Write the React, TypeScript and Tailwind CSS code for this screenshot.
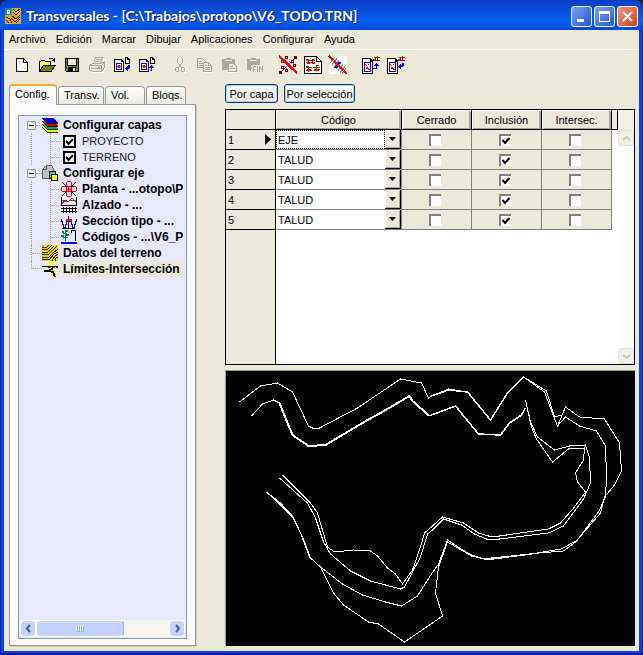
import { useState } from "react";
import type { ReactNode } from "react";
import clsx from "clsx";

type IconProps = { size?: number; children: ReactNode };

function Icon({ size = 16, children }: IconProps) {
  return (
    <svg width={size} height={size} viewBox={`0 0 ${size} ${size}`} fill="none" shapeRendering="crispEdges" className="shrink-0" aria-hidden="true">
      {children}
    </svg>
  );
}

const NewIcon = () => (
  <Icon>
    <path d="M2.5 1.5h7l4 4v9h-11z" fill="#fff" stroke="#000" />
    <path d="M9.5 1.5v4h4" stroke="#000" />
  </Icon>
);

const OpenIcon = () => (
  <Icon size={18}>
    <path d="M1.5 15.5v-10h1l1-1h3l1 1h5v3" fill="#ffff66" stroke="#000" />
    <path d="M1.5 15.5l4-6.5h12l-4.5 6.5z" fill="#808000" stroke="#000" />
    <path d="M10.5 3.5l1-1h3l2 2M16.5 1.5v4M14 4.5h3" stroke="#000" />
  </Icon>
);

const SaveIcon = () => (
  <Icon>
    <path d="M1.5 1.5h13v13h-12l-1-1z" fill="#808000" stroke="#000" />
    <path d="M4 2h8v6H4z" fill="#ece9d8" />
    <path d="M3.5 2v6.5h9V2" stroke="#000" />
    <path d="M4 10h8v5H4z" fill="#000" />
    <path d="M9 11h2v3H9z" fill="#ece9d8" />
  </Icon>
);

const PrintIcon = () => (
  <Icon size={18}>
    <path d="M5.5 7.5l2-6h7l-2 6M1.5 9.5l3-2h9l3-2v6l-3 4h-9l-3-2zM1.5 9.5h12v6M13.5 9.5l3-3" fill="#ece9d8" stroke="#aca899" />
    <path d="M8 3.5h5M7 5.5h5M3 12.5h9M10 11h2" stroke="#aca899" />
    <path d="M5 16.5h9l3-4" stroke="#fff" />
  </Icon>
);

function TransferIcon({ incoming }: { incoming: boolean }) {
  return (
    <Icon size={18}>
      <path d="M1 3h8v1h1v1h1v11H1z" fill="#000" />
      <path d="M2 4h6v2h2v9H2z" fill="#fff" />
      <path d="M3 7h6v7H3z" fill="#0000ff" />
      <path d="M4 8h4v5H4z" fill="#fff" />
      <path d="M4 10h4v1H4zM5 9h2v3H5z" fill="#ff0000" />
      <path d="M12 1h3v1h1v1h1v5h-5z" fill="#000" />
      <path d="M13 2h1v2h2v3h-3z" fill="#fff" />
      {incoming ? (
        <path d="M15 9h2v3h-1v1h-1v2h-1v-1h-1v-1h-1v-1h1v-1h1v-1h1z" fill="#0000ff" />
      ) : (
        <path d="M13 9h1v1h1v1h1v1h-2v3h-2v-1h1v-2h-2v-1h1v-1h1z" fill="#0000ff" />
      )}
    </Icon>
  );
}

const CutIcon = () => (
  <Icon>
    <path d="M5.5 1v4l4 6M10.5 1v4l-4 6" stroke="#aca899" />
    <path d="M4.5 10.5h2v4h-2l-1-1v-2zM9.5 10.5h2l1 1v2l-1 1h-2z" stroke="#aca899" />
    <path d="M6.5 2v3l1 2M13.5 12v3h-3" stroke="#fff" />
  </Icon>
);

const CopyIcon = () => (
  <Icon>
    <path d="M.5 1.5h5l3 3v6h-8z" fill="#ece9d8" stroke="#aca899" />
    <path d="M2 4.5h3M2 6.5h4M2 8.5h4" stroke="#aca899" />
    <path d="M6.5 5.5h5l3 3v6h-8z" fill="#ece9d8" stroke="#aca899" />
    <path d="M11.5 5.5v3h3M8 8.5h2M8 10.5h5M8 12.5h5" stroke="#aca899" />
    <path d="M1 11.5h5M7 15.5h8" stroke="#fff" />
  </Icon>
);

function PasteIcon({ toEnd }: { toEnd?: boolean }) {
  return (
    <Icon>
      <path d="M0 2h4V1h5v1h4v11H0z" fill="#aca899" />
      <path d="M3 3.5h7" stroke="#ece9d8" />
      {toEnd ? (
        <>
          <path d="M4 8h12v8H4z" fill="#ece9d8" />
          <path d="M1 11h4v1H1zM3 9h1v5H3zM6 9h3v1H7v2h1v1H7v2H6zM10 9h1v6h-1zM12 9h1v1h1v2h1V9h1v6h-1v-2h-1v-1h-1v3h-1z" fill="#aca899" />
        </>
      ) : (
        <>
          <path d="M6.5 6.5h5l3 3v5h-8z" fill="#ece9d8" stroke="#aca899" />
          <path d="M8 9.5h3M8 11.5h5" stroke="#aca899" />
          <path d="M7 15.5h8" stroke="#fff" />
        </>
      )}
    </Icon>
  );
}

const CrossingIcon = () => (
  <Icon size={20}>
    <path d="M18 2L2 18" stroke="#0000d0" />
    <path d="M6 4l1 4 4 4M12 4l-1 4 5 1M4 12l4-1 2 5" stroke="#6060ff" strokeDasharray="1 1" />
    <path d="M1 1l18 17" stroke="#ff0000" strokeWidth="2.5" />
    <path d="M3.5 5.5h2v2h-2zM7.5 1.5h2v2h-2zM13.5 5.5h2v2h-2zM16.5 1.5h2v2h-2zM3.5 11.5h2v2h-2zM7.5 14.5h2v2h-2zM1.5 16.5h2v2h-2zM15.5 9.5h2v2h-2z" stroke="#800000" />
  </Icon>
);

const SheetIcon = () => (
  <Icon size={20}>
    <path d="M1.5 1.5h12l5 5v12h-17z" fill="#fff" stroke="#000" />
    <path d="M13.5 1.5v5h5" stroke="#000" />
    <path d="M3 5.5h9M3 12.5h6M10 12.5h7" stroke="#007000" />
    <path d="M3 7h9v1H3zM5 4h1v5H5zM9 4h1v5H9zM3 4h3v1H3zM9 4h3v1H9zM3 15h6v1H3zM11 14h6v1h-6zM5 11h1v6H5zM13 10h1v6h-1zM3 11h3v1H3zM13 10h3v1h-3z" fill="#e00000" />
    <path d="M4 8h3v1H4zM9 8h3v1H9zM4 14h4v1H4zM11 15h5v1h-5z" fill="#e00000" />
  </Icon>
);

const AxisIcon = () => (
  <Icon size={20}>
    <path d="M1 1h18v18H1z" fill="#fff" />
    <path d="M2 8l5-6M4 10l5-7M6 12l5-7M8 14l5-7M10 16l5-7M12 18l5-7M14 19l4-6" stroke="#909090" />
    <path d="M7 13l5-6" stroke="#0000ff" strokeWidth="2" />
    <path d="M1 1l18 18" stroke="#ff0000" strokeWidth="1.5" strokeDasharray="6 1" />
  </Icon>
);

function ExportIcon({ down }: { down: boolean }) {
  return (
    <Icon size={20}>
      <path d="M1 3h9v1h1v1h1v14H1z" fill="#000" />
      <path d="M2 4h7v3h2v11H2z" fill="#fff" />
      <path d="M3 7h7v10H3z" fill="#0000ff" />
      <path d="M4 8h5v8H4z" fill="#fff" />
      <path d="M4 9h1v1h1v1H5v-1H4zM7 9h1v1H7zM5 12h2v1h1v1h1v1H7v-1H5z" fill="#ff0000" />
      <path d="M13 2h6v1h-6zM12 4h3v1h-3z" fill="#007000" />
      <path d="M12 5h7v1h-7zM14 2h1v4h-1zM16 1h1v5h-1z" fill="#d00000" />
      {down ? (
        <path d="M16 8h2v3h-1v1h-2v2h-1v-1h-1v-1h-1v-1h1v-1h1V9h1v1h1z" fill="#0000ff" />
      ) : (
        <path d="M15 8h1v1h1v1h1v1h-2v3h-4v-1h3v-2h-2v-1h1V9h1z" fill="#0000ff" />
      )}
    </Icon>
  );
}

const LayersIcon = () => (
  <Icon>
    <path d="M0 10h11l5 5H5z" fill="#ffff00" />
    <path d="M0 10l5 5h11" stroke="#404000" />
    <path d="M0 7h11l5 5H5z" fill="#00c000" />
    <path d="M0 7l5 5h11" stroke="#003000" />
    <path d="M0 4h11l5 5H5z" fill="#e00000" />
    <path d="M0 4l5 5h11" stroke="#300000" />
    <path d="M0 1h11l5 5H5z" fill="#0000e0" />
    <path d="M0 1l5 5h11" stroke="#000030" />
  </Icon>
);

const AxisConfigIcon = () => (
  <Icon>
    <path d="M.5 13.5v-9l4-4h5l2 3v10z" fill="#c0c0c0" stroke="#606060" />
    <path d="M4.5.5v4h-4" stroke="#606060" />
    <path d="M7.5 6.5h6v7h-6z" fill="#00e0ff" stroke="#000" />
    <path d="M9.5 9.5h6v6h-6z" fill="#ffff00" stroke="#000" />
  </Icon>
);

const PlanIcon = () => (
  <Icon>
    <path d="M1 1l14 14M15 1L1 15" stroke="#000" />
    <path d="M6.5.5h3l1 1v3l-1 1h-3l-1-1v-3zM1.5 5.5h3l1 1v3l-1 1h-3l-1-1v-3zM11.5 5.5h3l1 1v3l-1 1h-3l-1-1v-3zM6.5 10.5h3l1 1v3l-1 1h-3l-1-1v-3z" fill="#e8e8ff" stroke="#ff0000" />
    <path d="M6 6h4v4H6z" fill="#ffb0b0" />
    <path d="M7.5 6v4M6 8.5h4" stroke="#ff0000" />
  </Icon>
);

const ElevationIcon = () => (
  <Icon>
    <path d="M.5 0v9M15.5 0v9M0 8.5h16" stroke="#000" />
    <path d="M1 3l5 2 4-2 5 1" stroke="#008000" />
    <path d="M1 7l3-4 3 2 4-4 4 4" stroke="#ff0000" />
    <path d="M0 11.5h16M0 14.5h16M2.5 10v6M5.5 10v6M8.5 10v6M11.5 10v6M14.5 10v6" stroke="#000" />
  </Icon>
);

const SectionIcon = () => (
  <Icon>
    <path d="M.5 6v2h1v3h1v3h2v-3h1v-3h5v3h1v3h2v-3h1v-3h1v-2" stroke="#0000ff" />
    <path d="M7.5 3v12M1 15.5h13" stroke="#000" />
    <path d="M5 6h6v2H5z" fill="#ff0000" />
  </Icon>
);

const CodesIcon = () => (
  <Icon>
    <path d="M1 2h2v2H1zM4 1h3v2H4zM2 4h4v1H2zM0 6h3v2H0zM5 5h3v2H5zM2 8h5v1H2zM4 3h1v9H4z" fill="#008040" />
    <path d="M10.5 4v-3h4v11" stroke="#000" />
    <path d="M0 13h16v2H0z" fill="#0000ff" />
  </Icon>
);

const TerrainIcon = () => (
  <Icon>
    <path d="M0 0h16v16H0z" fill="#e8d800" />
    <path d="M0 2h2l2 1 3-3M0 4h3l2 1 5-5M0 7l5 1 7-7M0 9l6 1 4-4 5-5M0 12l6 1 5-5 5-4M0 14l7 1 5-6 4-2M10 16l3-5 3-2M13 16l1-3 2-1" stroke="#302c00" />
  </Icon>
);

const LimitsIcon = () => (
  <Icon>
    <path d="M4 5l6-5h3v6l2 10-7-3z" fill="#ffff60" />
    <path d="M0 5.5h16" stroke="#000" />
    <path d="M6 6.5h10" stroke="#b00000" strokeDasharray="3 1" />
    <path d="M11 7l-4 3H2M7 10l4 1 2 5" stroke="#000" strokeWidth="2" />
  </Icon>
);

const menus = ["Archivo", "Edición", "Marcar", "Dibujar", "Aplicaciones", "Configurar", "Ayuda"];

const toolGroups: { label: string; icon: ReactNode; disabled?: boolean }[][] = [
  [
    { label: "Nuevo", icon: <NewIcon /> },
    { label: "Abrir", icon: <OpenIcon /> },
    { label: "Guardar", icon: <SaveIcon /> },
    { label: "Imprimir", icon: <PrintIcon />, disabled: true },
    { label: "Importar", icon: <TransferIcon incoming /> },
    { label: "Exportar", icon: <TransferIcon incoming={false} /> },
  ],
  [
    { label: "Cortar", icon: <CutIcon />, disabled: true },
    { label: "Copiar", icon: <CopyIcon />, disabled: true },
    { label: "Pegar", icon: <PasteIcon />, disabled: true },
    { label: "Pegar al final", icon: <PasteIcon toEnd />, disabled: true },
  ],
  [
    { label: "Cruces", icon: <CrossingIcon /> },
    { label: "Hoja", icon: <SheetIcon /> },
    { label: "Eje", icon: <AxisIcon /> },
  ],
  [
    { label: "Enviar perfiles", icon: <ExportIcon down={false} /> },
    { label: "Recibir perfiles", icon: <ExportIcon down /> },
  ],
];

const tabs = [
  { label: "Config.", width: "w-12" },
  { label: "Transv.", width: "w-[46px]" },
  { label: "Vol.", width: "w-10" },
  { label: "Bloqs.", width: "w-10" },
];

const initialRows = [
  { code: "EJE", closed: false, included: true, crossed: false },
  { code: "TALUD", closed: false, included: true, crossed: false },
  { code: "TALUD", closed: false, included: true, crossed: false },
  { code: "TALUD", closed: false, included: true, crossed: false },
  { code: "TALUD", closed: false, included: true, crossed: false },
];

const thinLines = [
  "13,31 34,15 51,12 66,21 82,55 86,57 93,57 131,37 174,8 195,12 202,27 205,25 222,18 241,21 264,49 281,22 297,6 320,20 328,46 335,44",
  "297,6 318,21 327,45 331,55 339,36 353,46 378,48 393,72 395,100 388,114 378,126 374,142 349,171 337,180 313,182 265,187",
  "331,55 339,46 353,55 370,60 379,75 380,106 379,126 372,141 351,169 335,178 305,183 265,188 258,188 245,184 233,177 221,169 212,193 205,203 191,225 175,235 159,231 136,224 116,213 94,196 83,186 74,162 66,146 52,132 40,121",
  "40,121 54,132 66,145 76,166 84,187 94,196 107,222 117,234 142,251 152,253 178,271 206,252 216,245 209,222 212,196 221,171 233,178 245,185 258,188",
  "53,107 81,132 89,147 97,171 104,183 124,200 144,210 174,218 178,216 194,186 201,163 206,159 217,148 235,154 248,163 260,168 273,168 322,162 337,155 357,128 364,112 363,87 359,74 343,75 328,79 311,66 304,51 299,29",
  "56,104 84,132 91,142 98,166 101,176 108,181 127,179 144,180 151,185 161,197 169,203 176,213 186,199 194,176 198,162 206,155 216,146 237,152 252,162 262,165 273,165 322,158 334,152 348,136 359,121 351,111 349,102 357,89 358,77 342,78 326,91 310,68 305,56 300,34",
  "25,45 36,33 47,29 53,32",
];

const thickLines = [
  "53,32 61,52 66,64 82,75 99,74 141,49 154,42 183,25 186,30 203,45",
];

const mediumLines = ["203,45 205,44 229,35 252,63 274,64 283,52 295,44 299,37", "205,25 222,19 241,21 264,49 281,22 297,6", "305,183 265,188 258,188"];

function TitleBar() {
  const box = "flex size-[21px] items-center justify-center rounded-[3px] border border-white";
  return (
    <header className="flex h-[30px] shrink-0 items-center gap-[5px] rounded-t-lg bg-linear-to-b from-[#0a3cc4] via-[#0560f0] via-70% to-[#0047d8] px-[5px] pt-0.5">
      <svg width="16" height="16" viewBox="0 0 16 16" shapeRendering="crispEdges" aria-hidden="true">
        <path d="M0 0h16v16H0z" fill="#e0a820" />
        <path d="M8 1l3 3 4-3M8 4l3 3 4-4M1 9l4 2 2 4M7 8l4 3 4-4M6 10l4 4 5-5M1 12l3 3M11 15l4-4" fill="none" stroke="#302000" />
        <path d="M0 0h7v7H0z" fill="#209090" />
        <path d="M2 2h3v1H2zM3 4h1v1H3zM2 5h3v1H2zM2 2h1v4H2zM4 2h1v4H4z" fill="#fff" />
      </svg>
      <h1 className="grow truncate font-[Lato,'Open_Sans',sans-serif] text-[14px] font-bold leading-5 text-white [text-shadow:1px_1px_1px_#0a1883]">
        Transversales - [C:\Trabajos\protopo\V6_TODO.TRN]
      </h1>
      <div className="flex shrink-0 gap-0.5">
        <button aria-label="Minimizar" className={clsx(box, "bg-linear-to-br from-[#7ba2f0] to-[#2154d8]")}>
          <svg width="13" height="13" aria-hidden="true"><path d="M2 9h7v3H2z" fill="#fff" /></svg>
        </button>
        <button aria-label="Maximizar" className={clsx(box, "bg-linear-to-br from-[#7ba2f0] to-[#2154d8]")}>
          <svg width="13" height="13" shapeRendering="crispEdges" aria-hidden="true"><path d="M1.5 2v9.5h10V2" fill="none" stroke="#fff" /><path d="M1 1h11v3H1z" fill="#fff" /></svg>
        </button>
        <button aria-label="Cerrar" className={clsx(box, "bg-linear-to-br from-[#f0957a] to-[#d03c14]")}>
          <svg width="13" height="13" aria-hidden="true"><path d="M2 2l9 9M11 2l-9 9" stroke="#fff" strokeWidth="2" /></svg>
        </button>
      </div>
    </header>
  );
}

function Toolbar() {
  return (
    <div role="toolbar" aria-label="Herramientas" className="flex h-[30px] shrink-0 items-center gap-2 px-[5px]">
      {toolGroups.map((group, i) => (
        <div key={i} className="flex">
          {group.map((tool) => (
            <button key={tool.label} aria-label={tool.label} disabled={tool.disabled} className="flex h-6 w-[25px] items-center justify-center">
              {tool.icon}
            </button>
          ))}
        </div>
      ))}
    </div>
  );
}

function Expander({ open, label, onClick }: { open: boolean; label: string; onClick: () => void }) {
  return (
    <button onClick={onClick} aria-expanded={open} aria-label={label} className="flex size-[9px] shrink-0 items-center justify-center rounded-[1px] border border-[#8496ad] bg-[#f4f2ec]">
      <span className="h-px w-[5px] bg-black" />
    </button>
  );
}

function RootRow({ icon, label, selected, expander }: { icon: ReactNode; label: string; selected?: boolean; expander?: ReactNode }) {
  return (
    <div className="flex h-4 items-center">
      {expander ? (
        <span className="flex w-[22px] shrink-0 items-center pl-[7px]">
          {expander}
          <span className="grow border-t border-dotted border-[#a0a0a0]" />
        </span>
      ) : (
        <span className={clsx("ml-[11px] flex w-[11px] shrink-0 border-l border-dotted border-[#a0a0a0]", selected ? "h-2 self-start items-end" : "h-4 items-center")}>
          <span className="grow border-t border-dotted border-[#a0a0a0]" />
        </span>
      )}
      {icon}
      <span className={clsx("ml-1 h-4 px-px font-bold leading-4", selected && "bg-[#ece9d8] pr-1")}>{label}</span>
    </div>
  );
}

function Branch({ children }: { children: ReactNode }) {
  return (
    <div className="ml-[11px] border-l border-dotted border-[#a0a0a0]">
      <ul className="ml-[18px] border-l border-dotted border-[#a0a0a0]">{children}</ul>
    </div>
  );
}

function ChildRow({ children }: { children: ReactNode }) {
  return (
    <li className="flex h-4 items-center">
      <span className="w-2.5 shrink-0 border-t border-dotted border-[#a0a0a0]" />
      {children}
    </li>
  );
}

function LayerCheck({ label }: { label: string }) {
  return (
    <label className="flex items-center">
      <span className="grid size-4 place-items-center">
        <input type="checkbox" defaultChecked className="peer size-[13px] appearance-none border-2 border-black bg-white [grid-area:1/1]" />
        <svg width="9" height="9" className="pointer-events-none hidden [grid-area:1/1] peer-checked:block" aria-hidden="true">
          <path d="M1 4l2.5 3L8 2" fill="none" stroke="#000" strokeWidth="2" />
        </svg>
      </span>
      <span className="ml-1 px-px text-[11px] leading-4 text-[#202020]">{label}</span>
    </label>
  );
}

function Chevron({ dir, color }: { dir: "left" | "right" | "up" | "down"; color: string }) {
  const paths = {
    left: "M6 1L3 4.5 6 8",
    right: "M3 1l3 3.5L3 8",
    up: "M1 6l3.5-3L8 6",
    down: "M1 3l3.5 3L8 3",
  };
  return (
    <svg width="9" height="9" aria-hidden="true">
      <path d={paths[dir]} fill="none" stroke={color} strokeWidth="2" />
    </svg>
  );
}

function ConfigTree() {
  const [layersOpen, setLayersOpen] = useState(true);
  const [axisOpen, setAxisOpen] = useState(true);
  const axisItems = [
    { icon: <PlanIcon />, label: "Planta - ...otopo\\P" },
    { icon: <ElevationIcon />, label: "Alzado - ..." },
    { icon: <SectionIcon />, label: "Sección tipo - ..." },
    { icon: <CodesIcon />, label: "Códigos - ...\\V6_P" },
  ];

  return (
    <div className="flex grow flex-col border border-[#7f9db9] bg-[#e8e8ff] p-px">
      <div className="grow overflow-hidden whitespace-nowrap text-[12px]">
        <ul>
          <li>
            <RootRow icon={<LayersIcon />} label="Configurar capas" expander={<Expander open={layersOpen} label="Configurar capas" onClick={() => setLayersOpen(!layersOpen)} />} />
            {layersOpen && (
              <Branch>
                <ChildRow><LayerCheck label="PROYECTO" /></ChildRow>
                <ChildRow><LayerCheck label="TERRENO" /></ChildRow>
              </Branch>
            )}
          </li>
          <li>
            <RootRow icon={<AxisConfigIcon />} label="Configurar eje" expander={<Expander open={axisOpen} label="Configurar eje" onClick={() => setAxisOpen(!axisOpen)} />} />
            {axisOpen && (
              <Branch>
                {axisItems.map((item) => (
                  <ChildRow key={item.label}>
                    {item.icon}
                    <span className="ml-1 px-px font-bold leading-4">{item.label}</span>
                  </ChildRow>
                ))}
              </Branch>
            )}
          </li>
          <li><RootRow icon={<TerrainIcon />} label="Datos del terreno" /></li>
          <li><RootRow icon={<LimitsIcon />} label="Límites-Intersección" selected /></li>
        </ul>
      </div>
      <div className="flex h-[17px] shrink-0 bg-[#f6f5f0]">
        <button aria-label="Desplazar a la izquierda" className="flex w-4 items-center justify-center rounded-sm border border-white bg-[#c3d3fd]">
          <Chevron dir="left" color="#4d6185" />
        </button>
        <div className="flex grow">
          <div className="flex w-[88px] items-center justify-center gap-px rounded-sm border border-white border-r-[#98b0e8] bg-[#c3d3fd]">
            {[0, 1, 2, 3].map((i) => <span key={i} className="h-1.5 w-px bg-[#8cb0f8] shadow-[-1px_-1px_0_#eef4fe]" />)}
          </div>
        </div>
        <button aria-label="Desplazar a la derecha" className="flex w-4 items-center justify-center rounded-sm border border-white bg-[#c3d3fd]">
          <Chevron dir="right" color="#4d6185" />
        </button>
      </div>
    </div>
  );
}

function SidePanel() {
  const [active, setActive] = useState(0);
  return (
    <aside className="flex w-[187px] shrink-0 flex-col">
      <div role="tablist" className="flex h-5 items-end gap-px text-[11px]">
        {tabs.map((tab, i) => (
          <button
            key={tab.label}
            role="tab"
            aria-selected={active === i}
            onClick={() => setActive(i)}
            className={clsx(
              "rounded-t-sm border border-b-0 border-[#919b9c] pl-[5px] text-left",
              tab.width,
              active === i ? "z-10 -mb-px h-[21px] border-t-2 border-t-[#ffa928] bg-[#fcfcfe] pb-1" : "h-[18px] bg-linear-to-b from-white to-[#ece9e0]",
            )}
          >
            {tab.label}
          </button>
        ))}
      </div>
      <div className="flex grow flex-col border border-[#919b9c] bg-[#fbfbfa] px-2 pt-2.5 pb-1.5 shadow-[1px_1px_0_#d0cdbc]">
        <ConfigTree />
      </div>
    </aside>
  );
}

function CellCheck({ label, checked, onChange }: { label: string; checked: boolean; onChange: () => void }) {
  return (
    <span className="mx-auto grid size-3 place-items-center">
      <input
        type="checkbox"
        aria-label={label}
        checked={checked}
        onChange={onChange}
        className="size-3 appearance-none border-t-2 border-l-2 border-[#808080] bg-white [grid-area:1/1]"
      />
      {checked && (
        <svg width="8" height="8" className="pointer-events-none ml-0.5 mt-0.5 [grid-area:1/1]" aria-hidden="true">
          <path d="M.5 3l2.5 3L7.5 1" fill="none" stroke="#000" strokeWidth="2" />
        </svg>
      )}
    </span>
  );
}

function CodeGrid() {
  const [rows, setRows] = useState(initialRows);
  const flags = [
    { key: "closed", label: "Cerrado" },
    { key: "included", label: "Inclusión" },
    { key: "crossed", label: "Intersec." },
  ] as const;

  const update = (index: number, patch: Partial<(typeof initialRows)[number]>) => {
    setRows((prev) => prev.map((row, i) => (i === index ? { ...row, ...patch } : row)));
  };

  const head = "h-5 border-r border-b border-black p-0 font-normal shadow-[inset_1px_1px_0_#fff,inset_-2px_-1px_0_#aca899]";

  return (
    <div className="flex h-64 shrink-0 border border-black bg-white">
      <div className="flex min-w-0 grow flex-col">
        <table className="w-full table-fixed border-separate border-spacing-0 text-[11px] leading-4">
          <colgroup>
            <col className="w-[50px]" />
            <col />
            <col className="w-[70px]" />
            <col className="w-[70px]" />
            <col className="w-[70px]" />
            <col className="w-1.5" />
          </colgroup>
          <thead className="bg-[#ece9d8]">
            <tr>
              <th aria-label="Fila" className="h-5 border-r border-b border-black p-0" />
              <th scope="col" className={head}>Código</th>
              {flags.map((flag) => <th key={flag.key} scope="col" className={head}>{flag.label}</th>)}
              <td className="border-r border-b border-black p-0" />
            </tr>
          </thead>
          <tbody>
            {rows.map((row, i) => (
              <tr key={i}>
                <th scope="row" className="h-5 border-r border-b border-black bg-[#ece9d8] p-0 font-normal">
                  <span className="flex items-center justify-between pr-1 pl-0.5">
                    {i + 1}
                    {i === 0 && <svg width="6" height="11" aria-hidden="true"><path d="M0 0l6 5.5L0 11z" fill="#000" /></svg>}
                  </span>
                </th>
                <td className="h-5 border-r border-b border-[#808080] p-0">
                  <span className="flex h-[19px]">
                    <select
                      aria-label={`Código ${i + 1}`}
                      value={row.code}
                      onChange={(e) => update(i, { code: e.target.value })}
                      className={clsx("min-w-0 grow appearance-none border border-dotted bg-white px-px text-[11px] leading-4 outline-none", i === 0 ? "border-black" : "border-transparent")}
                    >
                      <option>EJE</option>
                      <option>TALUD</option>
                    </select>
                    <span className="flex w-4 shrink-0 items-center justify-center border-r border-b border-black bg-[#ece9d8] shadow-[inset_1px_1px_0_#fff,inset_-1px_-1px_0_#aca899]">
                      <svg width="7" height="4" aria-hidden="true"><path d="M0 0h7L3.5 4z" fill="#000" /></svg>
                    </span>
                  </span>
                </td>
                {flags.map((flag) => (
                  <td key={flag.key} className="h-5 border-r border-b border-[#808080] bg-[#ece9d8] p-0 pr-[3px]">
                    <CellCheck label={`${flag.label} ${i + 1}`} checked={row[flag.key]} onChange={() => update(i, { [flag.key]: !row[flag.key] })} />
                  </td>
                ))}
                <td className="p-0" />
              </tr>
            ))}
          </tbody>
        </table>
        <div className="w-[50px] grow border-r border-black bg-[#ece9d8]" />
      </div>
      <div className="flex w-4 shrink-0 flex-col justify-between bg-[#fdfdfb]">
        <div className="bg-[#f1efe6] pt-5">
          <button aria-label="Desplazar arriba" disabled className="flex h-4 w-full items-center justify-center rounded-sm border border-[#e4e2d6] bg-[#f1efe6]">
            <Chevron dir="up" color="#c9c7ba" />
          </button>
        </div>
        <button aria-label="Desplazar abajo" disabled className="flex h-4 w-full items-center justify-center rounded-sm border border-[#e4e2d6] bg-[#f1efe6]">
          <Chevron dir="down" color="#c9c7ba" />
        </button>
      </div>
    </div>
  );
}

function PlanView() {
  return (
    <div className="mt-[5px] min-h-0 grow border-t border-l border-[#9d9a8c] bg-black">
      <svg viewBox="0 0 408 275" className="size-full" fill="none" stroke="#fff" shapeRendering="crispEdges" role="img" aria-label="Vista en planta">
        {thinLines.map((points) => <polyline key={points} points={points} strokeWidth="1" />)}
        {mediumLines.map((points) => <polyline key={points} points={points} strokeWidth="1.5" />)}
        {thickLines.map((points) => <polyline key={points} points={points} strokeWidth="2" />)}
      </svg>
    </div>
  );
}

export default function App() {
  const filterButton = "h-[19px] rounded-[3px] border border-[#003c74] bg-linear-to-b from-white to-[#ecebe5] text-[11px] leading-4 shadow-[inset_0_0_0_1px_#b8cdee]";

  return (
    <div className="bg-[#16204a]">
      <div className="flex h-screen min-h-[480px] flex-col overflow-hidden rounded-t-lg bg-[#0046e0] font-['Liberation_Sans',Arial,sans-serif] text-black shadow-[inset_1px_-2px_0_#0019a8,inset_-1px_0_0_#0019a8]">
        <TitleBar />
        <div className="mx-1 mb-1 flex min-h-0 grow flex-col bg-[#ece9d8]">
          <nav className="flex h-5 shrink-0 items-center gap-2.5 border-b border-white px-[5px] pb-0.5 text-[11px]">
            {menus.map((menu) => <button key={menu} className="leading-4">{menu}</button>)}
          </nav>
          <Toolbar />
          <div className="flex min-h-0 grow gap-[29px] pt-1 pr-1 pb-[5px] pl-[5px]">
            <SidePanel />
            <main className="flex min-w-0 grow flex-col">
              <div className="mb-1.5 flex shrink-0 gap-1.5">
                <button className={clsx(filterButton, "w-[53px]")}>Por capa</button>
                <button className={clsx(filterButton, "w-[71px]")}>Por selección</button>
              </div>
              <CodeGrid />
              <PlanView />
            </main>
          </div>
        </div>
      </div>
    </div>
  );
}
